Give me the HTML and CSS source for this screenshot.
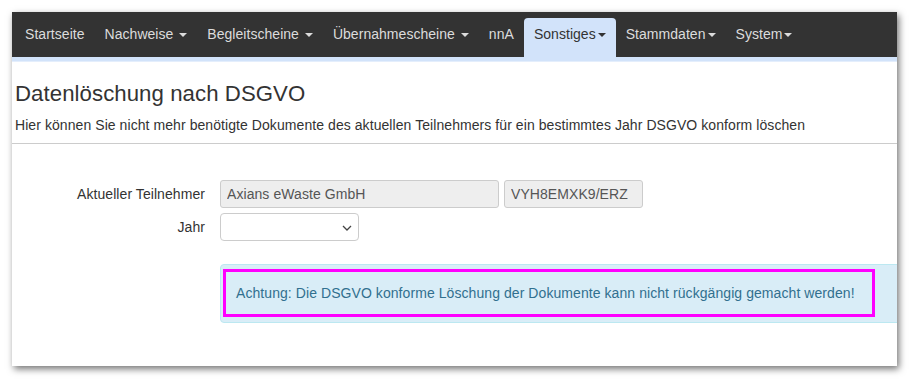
FILE: index.html
```html
<!DOCTYPE html>
<html lang="de">
<head>
    <meta charset="UTF-8">
    <title>Datenlöschung nach DSGVO</title>
    <link rel="stylesheet" href="styles.css">
</head>
<body>
    <div class="window">
        <nav class="navbar">
            <a class="nav-item" href="#">Startseite</a>
            <a class="nav-item" href="#">Nachweise <span class="caret"></span></a>
            <a class="nav-item" href="#">Begleitscheine <span class="caret"></span></a>
            <a class="nav-item" href="#">Übernahmescheine <span class="caret"></span></a>
            <a class="nav-item" href="#">nnA</a>
            <a class="nav-item active" href="#">Sonstiges<span class="caret"></span></a>
            <a class="nav-item" href="#">Stammdaten<span class="caret"></span></a>
            <a class="nav-item" href="#">System<span class="caret"></span></a>
        </nav>
        <div class="nav-stripe"></div>

        <header class="page-header">
            <h1>Datenlöschung nach DSGVO</h1>
            <p>Hier können Sie nicht mehr benötigte Dokumente des aktuellen Teilnehmers für ein bestimmtes Jahr DSGVO konform löschen</p>
        </header>
        <hr class="divider">

        <form class="form">
            <label class="form-label">Aktueller Teilnehmer</label>
            <div class="form-controls">
                <input class="input input-name" type="text" value="Axians eWaste GmbH" disabled>
                <input class="input input-code" type="text" value="VYH8EMXK9/ERZ" disabled>
            </div>

            <label class="form-label" for="year">Jahr</label>
            <div class="form-controls">
                <div class="select-wrap">
                    <select id="year" class="select">
                        <option></option>
                    </select>
                    <svg class="select-arrow" width="10" height="6" viewBox="0 0 10 6">
                        <path d="M1 1 L5 5 L9 1" fill="none" stroke="#444" stroke-width="1.3"/>
                    </svg>
                </div>
            </div>

            <div></div>
            <div class="alert">
                <div class="alert-mark">Achtung: Die DSGVO konforme Löschung der Dokumente kann nicht rückgängig gemacht werden!</div>
            </div>
        </form>
    </div>
</body>
</html>
```

FILE: styles.css
```css
* {
    margin: 0;
    padding: 0;
    box-sizing: border-box;
}

body {
    background-color: #ffffff;
    font-family: 'Liberation Sans', Arial, sans-serif;
    font-size: 14px;
    line-height: 20px;
    letter-spacing: 0.07px;
    color: #333333;
    padding: 12px 13px 14px 12px;
}

.window {
    width: 885px;
    height: 354px;
    background-color: #ffffff;
    overflow: hidden;
    box-shadow: 2px 3px 7px rgba(0,0,0,0.55);
}

/* navigation */
.navbar {
    display: flex;
    height: 45px;
    padding-left: 3px;
    background-color: #333333;
    letter-spacing: 0.04px;
}

.nav-item {
    display: block;
    padding: 0 10px;
    line-height: 45px;
    color: #dcdcdc;
    text-decoration: none;
    white-space: nowrap;
}

.nav-item.active {
    margin-top: 6px;
    line-height: 33px;
    background-color: #d2e3fa;
    color: #333333;
    border-radius: 4px 4px 0 0;
}

.caret {
    display: inline-block;
    width: 0;
    height: 0;
    margin-left: 2px;
    vertical-align: middle;
    border-top: 4px solid;
    border-left: 4px solid transparent;
    border-right: 4px solid transparent;
}

.nav-stripe {
    height: 5px;
    background-color: #d2e3fa;
    border-bottom: 1px solid #e4eefc;
}

/* header */
.page-header {
    padding: 20px 3px 0;
}

.page-header h1 {
    font-size: 22.2px;
    font-weight: normal;
    line-height: 1.1;
    margin-bottom: 9px;
}

.divider {
    border: none;
    border-top: 1px solid #cccccc;
    margin-top: 8px;
}

/* form */
.form {
    display: grid;
    grid-template-columns: 193px 1fr;
    column-gap: 15px;
    row-gap: 5px;
    padding-top: 36px;
}

.form-label {
    text-align: right;
    align-self: center;
}

.form-controls {
    display: flex;
    gap: 5px;
}

.input {
    height: 28px;
    padding: 0 6px;
    border: 1px solid #cccccc;
    border-radius: 3px;
    background-color: #eeeeee;
    color: #555555;
    font-family: inherit;
    font-size: 14px;
    letter-spacing: 0.07px;
}

.input-name {
    width: 279px;
}

.input-code {
    width: 139px;
}

.select-wrap {
    position: relative;
    width: 139px;
    height: 28px;
}

.select {
    width: 100%;
    height: 100%;
    appearance: none;
    border: 1px solid #cccccc;
    border-radius: 4px;
    background-color: #ffffff;
    font-family: inherit;
    font-size: 14px;
}

.select-arrow {
    position: absolute;
    right: 7px;
    top: 12px;
    pointer-events: none;
}

.alert {
    width: 720px;
    margin-top: 18px;
    padding: 4px 2px 5px;
    border: 1px solid #bce8f1;
    border-radius: 4px;
    background-color: #d9edf7;
    color: #31708f;
}

.alert-mark {
    width: 652px;
    padding: 11px 10px;
    border: 3px solid #ff00ff;
}
```
